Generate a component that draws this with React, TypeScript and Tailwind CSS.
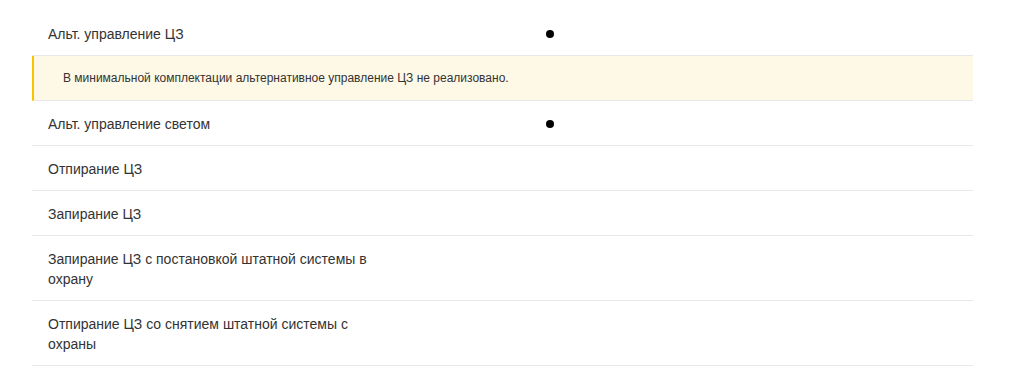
const rows: { name: string; alt?: boolean; note?: string }[] = [
  {
    name: 'Альт. управление ЦЗ',
    alt: true,
    note: 'В минимальной комплектации альтернативное управление ЦЗ не реализовано.',
  },
  { name: 'Альт. управление светом', alt: true },
  { name: 'Отпирание ЦЗ' },
  { name: 'Запирание ЦЗ' },
  { name: 'Запирание ЦЗ с постановкой штатной системы в охрану' },
  { name: 'Отпирание ЦЗ со снятием штатной системы с охраны' },
];

export default function App() {
  return (
    <div
      className="min-h-screen bg-white pt-[11px] text-[#333]"
      style={{ fontFamily: '"Liberation Sans", Arial, sans-serif' }}
    >
      <div className="ml-8 w-[941px]">
        {rows.map((row, i) => (
          <div key={i}>
            <div className="flex border-b border-[#e8e8e8]">
              <div className="w-[368px] px-4 pt-[13px] pb-[11px] text-sm leading-5">{row.name}</div>
              <div className="flex w-[300px] items-center justify-center pt-[13px] pb-[11px]">
                {row.alt && <span className="block h-2 w-2 rounded-full bg-black" />}
              </div>
              <div className="flex-1" />
            </div>
            {row.note && (
              <div className="flex h-[45px] items-center border-b border-l-2 border-b-[#e8e8e8] border-l-[#f8c400] bg-[#fef8e6] pl-[29px] text-xs">
                {row.note}
              </div>
            )}
          </div>
        ))}
      </div>
    </div>
  );
}
